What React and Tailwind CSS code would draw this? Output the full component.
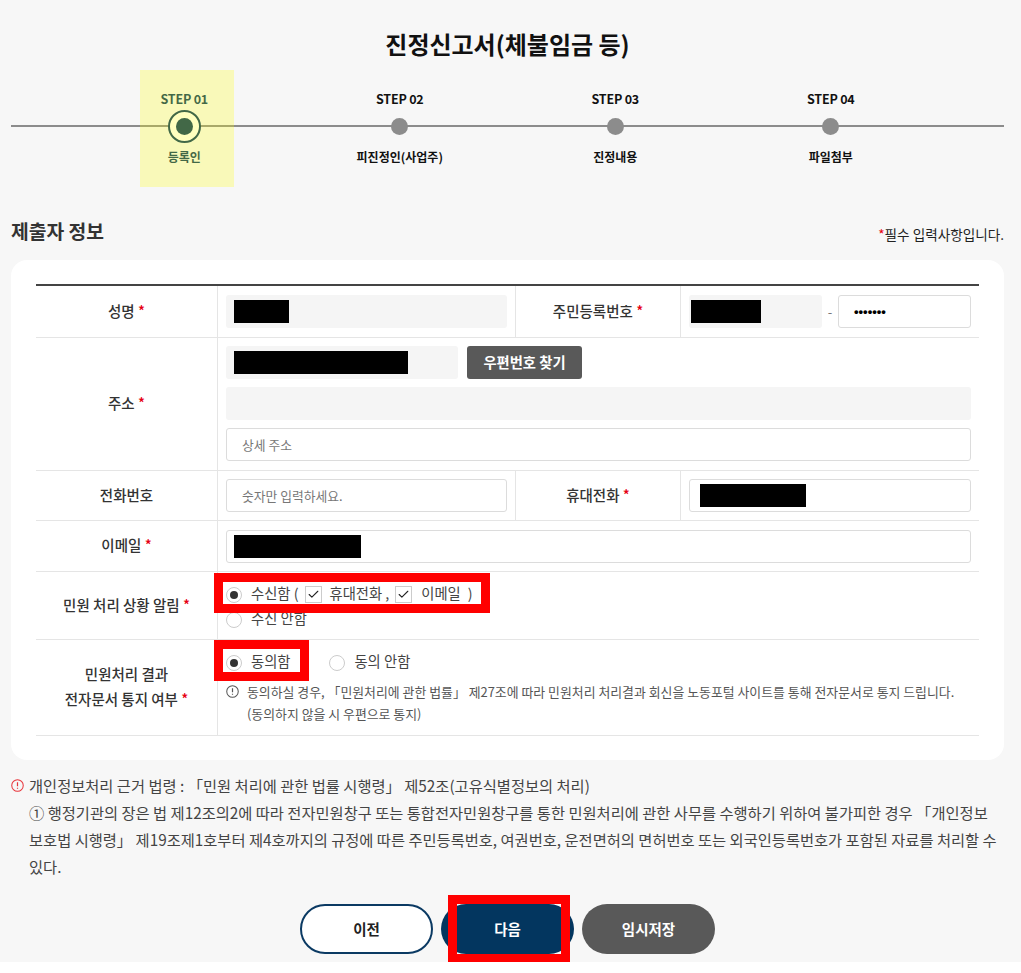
import { Check } from "lucide-react";

const FONT = "font-['Noto_Sans_CJK_KR','Noto_Sans',sans-serif]";

const steps = [
  { no: "STEP 01", label: "등록인", active: true },
  { no: "STEP 02", label: "피진정인(사업주)" },
  { no: "STEP 03", label: "진정내용" },
  { no: "STEP 04", label: "파일첨부" },
];

const Star = () => <span className="text-[#e60012]">*</span>;

const Label = ({ children, required, className = "" }) => (
  <div className={`flex items-center justify-center pb-[3px] text-center text-[14.5px] leading-[25px] font-medium text-[#333] ${className}`}>
    <span>
      {children}
      {required && (
        <>
          {" "}
          <Star />
        </>
      )}
    </span>
  </div>
);

const Masked = ({ className }) => <div className={`h-[23px] bg-black ${className}`} />;

const ReadOnly = ({ className = "", children }) => (
  <div className={`flex h-[33px] items-center rounded-[3px] bg-[#f5f5f5] ${className}`}>{children}</div>
);

const Field = ({ className = "", children }) => (
  <div className={`flex h-[33px] items-center rounded-[3px] border border-[#dcdcdc] bg-white text-[12.8px] text-[#777] ${className}`}>
    {children}
  </div>
);

const Radio = ({ checked }) => (
  <span className="flex h-[16px] w-[16px] shrink-0 items-center justify-center rounded-full border border-[#ccc] bg-white">
    {checked && <span className="h-[8px] w-[8px] rounded-full bg-[#333]" />}
  </span>
);

const Checkbox = () => (
  <span className="flex h-[17px] w-[17px] shrink-0 items-center justify-center border border-[#ccc] bg-white">
    <Check className="h-[13px] w-[13px] text-[#222]" strokeWidth={2} />
  </span>
);

const InfoIcon = ({ className }) => (
  <svg viewBox="0 0 14 14" className={className} fill="none" stroke="currentColor">
    <circle cx="7" cy="7" r="6.2" strokeWidth="1.1" />
    <path d="M7 3.4v4.4M7 9.4v1.2" strokeWidth="1.3" />
  </svg>
);

const RedBox = ({ className }) => (
  <div className={`pointer-events-none absolute border-[9px] border-[#ff0000] ${className}`} />
);

export default function App() {
  return (
    <div className={`relative h-[962px] w-[1021px] bg-[#f7f7f7] pr-[17px] pl-[11px] text-[#333] ${FONT}`}>
      <h1 className="pt-[26px] text-center text-[24px] leading-[36px] font-bold text-[#111]">
        진정신고서(체불임금 등)
      </h1>

      <div className="relative mt-[25px] h-[80px]">
        <div className="absolute top-[38px] right-0 left-0 h-[2px] bg-[#8c8c8c]" />
        <div className="relative ml-[65.5px] grid w-[862px] grid-cols-4">
          {steps.map((s) => (
            <div key={s.no} className={`flex flex-col items-center pt-[2px] ${s.active ? "text-[#03365f]" : "text-[#111]"}`}>
              <span className="text-[12.5px] leading-[20px] font-bold tracking-[-0.2px]">{s.no}</span>
              <span className="flex h-[34px] w-[34px] items-center justify-center">
                {s.active ? (
                  <span className="flex h-[33px] w-[33px] items-center justify-center rounded-full border-2 border-[#03365f] bg-white">
                    <span className="h-[17px] w-[17px] rounded-full bg-[#03365f]" />
                  </span>
                ) : (
                  <span className="h-[17px] w-[17px] rounded-full bg-[#8c8c8c]" />
                )}
              </span>
              <span className="mt-[4px] text-[12px] leading-[20px] font-bold whitespace-nowrap">{s.label}</span>
            </div>
          ))}
        </div>
      </div>

      <div className="mt-[50px] flex items-end justify-between">
        <h2 className="text-[19.3px] leading-[28px] font-bold">제출자 정보</h2>
        <p className="pb-[1px] text-[13.6px] leading-[20px] text-[#222]">
          <Star />필수 입력사항입니다.
        </p>
      </div>

      <div className="mt-[15px] h-[500px] rounded-[16px] bg-white px-[25px] pt-[24px]">
        <div className="border-t-2 border-[#444]">
          <div className="grid h-[52px] grid-cols-[181px_298px_165px_1fr] border-b border-[#e5e5e5]">
            <Label required>성명</Label>
            <div className="flex items-center border-l border-[#e5e5e5] px-[8px]">
              <ReadOnly className="w-full pl-[8px]">
                <Masked className="w-[55px]" />
              </ReadOnly>
            </div>
            <Label required className="border-l border-[#e5e5e5]">주민등록번호</Label>
            <div className="flex items-center border-l border-[#e5e5e5] pl-[8px]">
              <ReadOnly className="w-[133px] pl-[2px]">
                <Masked className="w-[70px]" />
              </ReadOnly>
              <span className="w-[16px] text-center text-[13px] text-[#777]">-</span>
              <Field className="w-[133px] pl-[15px] font-['Liberation_Sans',sans-serif] text-[13px] font-bold text-black">•••••••</Field>
            </div>
          </div>

          <div className="grid h-[133px] grid-cols-[181px_1fr] border-b border-[#e5e5e5]">
            <Label required>주소</Label>
            <div className="flex flex-col gap-[8px] border-l border-[#e5e5e5] pt-[8px] pr-[8px] pl-[8px]">
              <div className="flex gap-[9px]">
                <ReadOnly className="w-[232px] pl-[8px]">
                  <Masked className="w-[174px]" />
                </ReadOnly>
                <button className="h-[33px] w-[115px] rounded-[3px] bg-[#595959] pb-[2px] text-[14.3px] font-bold text-white">
                  우편번호 찾기
                </button>
              </div>
              <ReadOnly />
              <Field className="pl-[15px]">상세 주소</Field>
            </div>
          </div>

          <div className="grid h-[50px] grid-cols-[181px_298px_165px_1fr] border-b border-[#e5e5e5]">
            <Label>전화번호</Label>
            <div className="flex items-center border-l border-[#e5e5e5] px-[8px]">
              <Field className="w-full pl-[15px]">숫자만 입력하세요.</Field>
            </div>
            <Label required className="border-l border-[#e5e5e5]">휴대전화</Label>
            <div className="flex items-center border-l border-[#e5e5e5] pl-[8px]">
              <Field className="w-[282px] pl-[10px]">
                <Masked className="w-[106px]" />
              </Field>
            </div>
          </div>

          <div className="grid h-[51px] grid-cols-[181px_1fr] border-b border-[#e5e5e5]">
            <Label required>이메일</Label>
            <div className="flex items-center border-l border-[#e5e5e5] pr-[8px] pl-[8px]">
              <Field className="w-full pl-[7px]">
                <Masked className="w-[127px]" />
              </Field>
            </div>
          </div>

          <div className="grid h-[68px] grid-cols-[181px_1fr] border-b border-[#e5e5e5]">
            <Label required>민원 처리 상황 알림</Label>
            <div className="flex flex-col gap-[6px] border-l border-[#e5e5e5] pt-[13px] pl-[8px] text-[14.3px] leading-[16px] text-[#444]">
              <div className="flex items-center">
                <Radio checked />
                <span className="mb-[3px] ml-[9px]">수신함 (</span>
                <span className="ml-[6px]"><Checkbox /></span>
                <span className="mb-[3px] ml-[8px]">휴대전화 ,</span>
                <span className="ml-[6px]"><Checkbox /></span>
                <span className="mb-[3px] ml-[9px]">이메일</span>
                <span className="mb-[3px] ml-[7px]">)</span>
              </div>
              <div className="flex items-center">
                <Radio />
                <span className="mb-[3px] ml-[9px]">수신 안함</span>
              </div>
            </div>
          </div>

          <div className="grid h-[96px] grid-cols-[181px_1fr] border-b border-[#e5e5e5]">
            <Label required>
              민원처리 결과
              <br />
              전자문서 통지 여부
            </Label>
            <div className="border-l border-[#e5e5e5] pt-[13px] pl-[8px] text-[#444]">
              <div className="flex items-center text-[14.3px] leading-[16px]">
                <Radio checked />
                <span className="mb-[3px] ml-[9px]">동의함</span>
                <span className="ml-[39px]"><Radio /></span>
                <span className="mb-[3px] ml-[9px]">동의 안함</span>
              </div>
              <div className="mt-[9px] flex text-[12.9px] leading-[22px] text-[#555]">
                <InfoIcon className="mt-[4px] h-[13px] w-[13px] shrink-0 text-[#555]" />
                <p className="ml-[8px] whitespace-nowrap">
                  동의하실 경우, 「민원처리에 관한 법률」 제27조에 따라 민원처리 처리결과 회신을 노동포털 사이트를 통해 전자문서로 통지 드립니다.
                  <br />
                  (동의하지 않을 시 우편으로 통지)
                </p>
              </div>
            </div>
          </div>
        </div>
      </div>

      <div className="mt-[12px] flex text-[15.3px] leading-[27px] text-[#444]">
        <InfoIcon className="mt-[7px] h-[13px] w-[13px] shrink-0 text-[#e8353b]" />
        <p className="ml-[5px] whitespace-nowrap">
          개인정보처리 근거 법령 : 「민원 처리에 관한 법률 시행령」 제52조(고유식별정보의 처리)
          <br />
          ① 행정기관의 장은 법 제12조의2에 따라 전자민원창구 또는 통합전자민원창구를 통한 민원처리에 관한 사무를 수행하기 위하여 불가피한 경우 「개인정보
          <br />
          보호법 시행령」 제19조제1호부터 제4호까지의 규정에 따른 주민등록번호, 여권번호, 운전면허의 면허번호 또는 외국인등록번호가 포함된 자료를 처리할 수
          <br />
          있다.
        </p>
      </div>

      <div className="mt-[24px] flex justify-center gap-[8px]">
        <button className="h-[50px] w-[133px] rounded-full border-2 border-[#0b3a63] bg-white pb-[1px] text-[14.5px] font-bold text-[#222]">이전</button>
        <button className="h-[50px] w-[133px] rounded-full bg-[#03365f] pb-[1px] text-[14.5px] font-bold text-white">다음</button>
        <button className="h-[50px] w-[133px] rounded-full bg-[#595959] pb-[1px] text-[14.5px] font-bold text-white">임시저장</button>
      </div>

      <div className="pointer-events-none absolute top-[70px] left-[140px] h-[117px] w-[94px] bg-[#ffff00]/25" />
      <RedBox className="top-[573px] left-[214px] h-[40px] w-[276px]" />
      <RedBox className="top-[640px] left-[214px] h-[41px] w-[95px]" />
      <RedBox className="top-[895px] left-[448px] h-[68px] w-[122px]" />
    </div>
  );
}
